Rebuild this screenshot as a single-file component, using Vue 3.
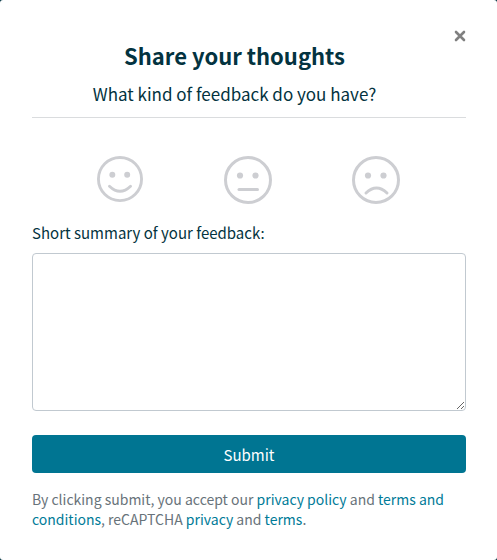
<script setup>
import { ref } from 'vue'

const rating = ref('')
const summary = ref('')
const open = ref(true)

const faces = [
  { id: 'happy', label: 'Happy', size: 46, mouth: 'M13 31.5 Q24 42 35 31.5' },
  { id: 'neutral', label: 'Neutral', size: 48, mouth: 'M15 33.5 H33.5' },
  { id: 'sad', label: 'Sad', size: 48, mouth: 'M14 37 Q24.5 27 35 37' },
]
</script>

<template>
  <main v-if="open" class="dialog" role="dialog" aria-labelledby="dialog-title">
    <header class="header">
      <div class="heading">
        <h1 id="dialog-title" class="title">Share your thoughts</h1>
        <p class="subtitle">What kind of feedback do you have?</p>
      </div>
      <button class="close" type="button" aria-label="Close" @click="open = false">
        <svg width="12" height="12" viewBox="0 0 12 12" aria-hidden="true">
          <path d="M2 2 L10 10 M10 2 L2 10" />
        </svg>
      </button>
    </header>

    <form class="form" @submit.prevent>
      <div class="faces">
        <button
          v-for="face in faces"
          :key="face.id"
          class="face"
          type="button"
          :aria-label="face.label"
          :aria-pressed="rating === face.id"
          @click="rating = face.id"
        >
          <svg :width="face.size" :height="face.size" viewBox="0 0 48 48" aria-hidden="true">
            <circle class="line" cx="24" cy="24" r="22.5" />
            <circle class="eye" cx="16" cy="19.5" r="3.1" />
            <circle class="eye" cx="31.5" cy="19.5" r="3.1" />
            <path class="line" :d="face.mouth" />
          </svg>
        </button>
      </div>

      <label class="label" for="summary">Short summary of your feedback:</label>
      <textarea id="summary" v-model="summary" class="summary"></textarea>
      <button class="submit" type="submit">Submit</button>
    </form>

    <p class="terms">
      By clicking submit, you accept our <a href="#">privacy policy</a> and
      <a href="#">terms and conditions</a>, reCAPTCHA <a href="#">privacy</a> and
      <a href="#">terms</a>.
    </p>
  </main>
</template>

<style>
body {
  background: #003340;
}
</style>

<style scoped>
.dialog {
  box-sizing: border-box;
  min-height: 100vh;
  padding: 28px 31px 30px 32px;
  border-radius: 3px;
  background: #fff;
  color: #033340;
  font-family: "Noto Sans CJK SC", "Noto Sans", sans-serif;
}

.header {
  display: flex;
  align-items: flex-start;
  padding-bottom: 9px;
  border-bottom: 1px solid #dadcde;
}

.heading {
  flex: 1;
  padding-top: 12px;
  text-align: center;
}

.title {
  margin: 0;
  font-size: 22px;
  font-weight: 700;
  line-height: 30px;
}

.subtitle {
  margin: 10px 0 0;
  font-size: 17px;
  line-height: 28px;
}

.close {
  display: flex;
  justify-content: flex-end;
  width: 29px;
  padding: 2px 0;
  border: 0;
  background: none;
  cursor: pointer;
}

.close path {
  fill: none;
  stroke: #808080;
  stroke-width: 2.6;
  stroke-linecap: round;
}

.form {
  display: flex;
  flex-direction: column;
}

.faces {
  display: flex;
  align-items: flex-start;
  justify-content: space-between;
  padding: 38px 66px 17px 65px;
}

.face {
  display: flex;
  padding: 0;
  border: 0;
  background: none;
  cursor: pointer;
}

.line {
  fill: none;
  stroke: #cdced2;
  stroke-width: 3;
  stroke-linecap: round;
}

.eye {
  fill: #cdced2;
}

.label {
  font-size: 15px;
  line-height: 24px;
}

.summary {
  box-sizing: border-box;
  width: 100%;
  height: 158px;
  margin: 8px 0 24px;
  padding: 8px;
  border: 1px solid #c1c9d0;
  border-radius: 4px;
  background: #fff;
  color: inherit;
  font: inherit;
  resize: vertical;
}

.submit {
  height: 38px;
  padding: 0;
  border: 0;
  border-radius: 4px;
  background: #007592;
  color: #fff;
  font-family: inherit;
  font-size: 15px;
  cursor: pointer;
}

.terms {
  margin: 16px 0 0;
  color: #68737a;
  font-size: 14px;
  line-height: 20px;
}

.terms a {
  color: #007b98;
  text-decoration: none;
}
</style>
